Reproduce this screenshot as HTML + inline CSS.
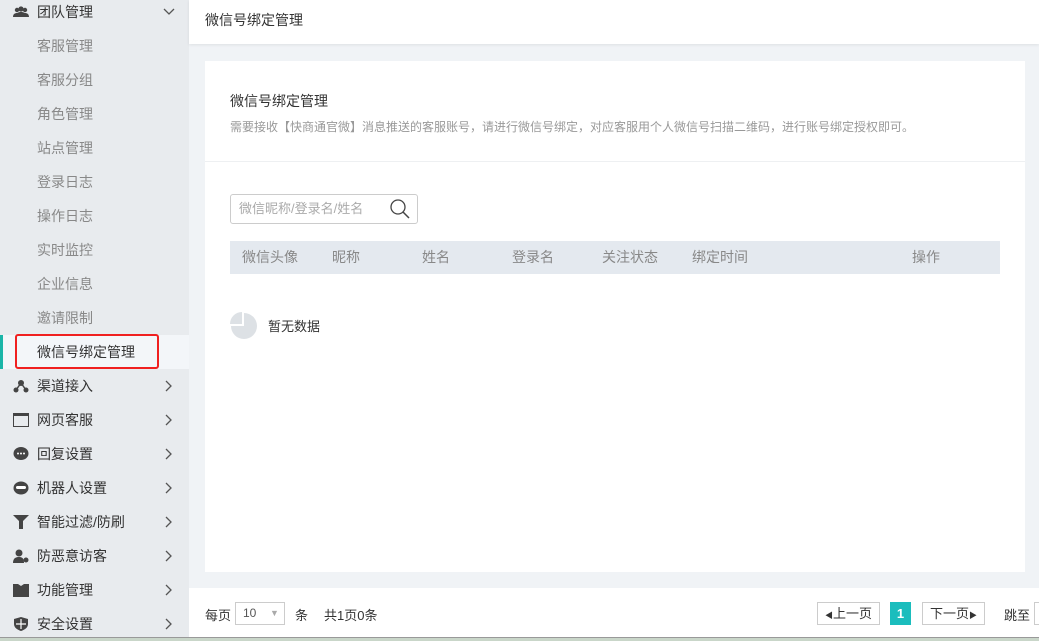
<!DOCTYPE html>
<html><head><meta charset="utf-8"><style>
*{margin:0;padding:0;box-sizing:border-box}
body{width:1039px;height:641px;overflow:hidden;background:#f0f3f6;font-family:"Liberation Sans","Noto Sans CJK SC",sans-serif;position:relative;font-size:14px;color:#333}
.side{position:absolute;left:0;top:0;width:189px;height:637px;background:#e8ebee}
.it{position:absolute;left:0;width:189px;height:34px;line-height:34px;font-size:14px}
.sub{padding-left:37px;color:#888}
.top{padding-left:37px;color:#333}
.ic{position:absolute;left:13px;top:10px;width:16px;height:14px}
.ar{position:absolute;left:165px;top:11px;width:8px;height:12px}
.act{background:#f3f6f9;border-left:3px solid #1ab5a8;padding-left:34px;color:#333}
.red{position:absolute;left:15px;top:334px;width:144px;height:35px;border:2px solid #f02020;border-radius:3px}
.hdr{position:absolute;left:189px;top:0;width:850px;height:44px;background:#fff;box-shadow:0 1px 3px rgba(0,0,0,.08);line-height:40px;padding-left:16px;font-size:14px;color:#333}
.card{position:absolute;left:205px;top:61px;width:820px;height:511px;background:#fff}
.foot{position:absolute;left:189px;top:588px;width:850px;height:49px;background:#fff;font-size:13px;color:#333}
.bl{position:absolute;left:0;top:637px;width:1039px;height:4px;background:#c9d6c9;border-top:1px solid #999}
</style></head><body>
<div class="side">
<div class="it top" style="top:-5px"><svg class="ic" viewBox="0 0 16 14"><circle cx="4" cy="5" r="2.2" fill="#444"/><circle cx="12" cy="5" r="2.2" fill="#444"/><circle cx="8" cy="4" r="2.6" fill="#444"/><path d="M0 12c0-3 2-4 4-4s4 1 4 4zM8 12c0-3 2-4 4-4s4 1 4 4zM3 12c0-4 2-5 5-5s5 1 5 5z" fill="#444"/></svg>团队管理<svg style="position:absolute;left:163px;top:13px" width="12" height="8" viewBox="0 0 12 8"><path d="M1 1l5 5 5-5" fill="none" stroke="#555" stroke-width="1.3"/></svg></div>
<div class="it sub" style="top:29px">客服管理</div>
<div class="it sub" style="top:63px">客服分组</div>
<div class="it sub" style="top:97px">角色管理</div>
<div class="it sub" style="top:131px">站点管理</div>
<div class="it sub" style="top:165px">登录日志</div>
<div class="it sub" style="top:199px">操作日志</div>
<div class="it sub" style="top:233px">实时监控</div>
<div class="it sub" style="top:267px">企业信息</div>
<div class="it sub" style="top:301px">邀请限制</div>
<div class="it act" style="top:335px">微信号绑定管理</div>
<div class="it top" style="top:369px"><svg class="ic" viewBox="0 0 16 14"><circle cx="8" cy="4" r="3" fill="#444"/><circle cx="3" cy="11" r="2.5" fill="#444"/><circle cx="13" cy="11" r="2.5" fill="#444"/><path d="M8 4L3 11M8 4l5 7" stroke="#444" stroke-width="1.5"/></svg>渠道接入<svg class="ar" viewBox="0 0 8 12"><path d="M1 1l5 5-5 5" fill="none" stroke="#555" stroke-width="1.3"/></svg></div>
<div class="it top" style="top:403px"><svg class="ic" viewBox="0 0 16 14"><rect x=".5" y=".5" width="15" height="13" fill="none" stroke="#444"/><rect x="0" y="0" width="16" height="3" fill="#444"/></svg>网页客服<svg class="ar" viewBox="0 0 8 12"><path d="M1 1l5 5-5 5" fill="none" stroke="#555" stroke-width="1.3"/></svg></div>
<div class="it top" style="top:437px"><svg class="ic" viewBox="0 0 16 14"><ellipse cx="8" cy="6.5" rx="7.5" ry="6.5" fill="#444"/><circle cx="5" cy="6.5" r="1" fill="#fff"/><circle cx="8" cy="6.5" r="1" fill="#fff"/><circle cx="11" cy="6.5" r="1" fill="#fff"/></svg>回复设置<svg class="ar" viewBox="0 0 8 12"><path d="M1 1l5 5-5 5" fill="none" stroke="#555" stroke-width="1.3"/></svg></div>
<div class="it top" style="top:471px"><svg class="ic" viewBox="0 0 16 14"><ellipse cx="8" cy="7" rx="7.5" ry="6.5" fill="#444"/><rect x="3" y="5" width="10" height="3" rx="1.5" fill="#fff"/></svg>机器人设置<svg class="ar" viewBox="0 0 8 12"><path d="M1 1l5 5-5 5" fill="none" stroke="#555" stroke-width="1.3"/></svg></div>
<div class="it top" style="top:505px"><svg class="ic" viewBox="0 0 16 14"><path d="M0 0h16L10 6v8H6V6z" fill="#444"/></svg>智能过滤/防刷<svg class="ar" viewBox="0 0 8 12"><path d="M1 1l5 5-5 5" fill="none" stroke="#555" stroke-width="1.3"/></svg></div>
<div class="it top" style="top:539px"><svg class="ic" viewBox="0 0 16 14"><circle cx="6" cy="4" r="3.5" fill="#444"/><path d="M0 14c0-5 3-6 6-6s5 1 5 6z" fill="#444"/><circle cx="13" cy="11" r="2.5" fill="#444"/></svg>防恶意访客<svg class="ar" viewBox="0 0 8 12"><path d="M1 1l5 5-5 5" fill="none" stroke="#555" stroke-width="1.3"/></svg></div>
<div class="it top" style="top:573px"><svg class="ic" viewBox="0 0 16 14"><path d="M0 1h5l3 2 3-2h5v13H0z" fill="#444"/></svg>功能管理<svg class="ar" viewBox="0 0 8 12"><path d="M1 1l5 5-5 5" fill="none" stroke="#555" stroke-width="1.3"/></svg></div>
<div class="it top" style="top:607px"><svg class="ic" viewBox="0 0 16 14"><path d="M8 0l7 2v5c0 4-4 6-7 7-3-1-7-3-7-7V2z" fill="#444"/><path d="M8 2v10M3 7h10" stroke="#fff" stroke-width="1.2"/></svg>安全设置<svg class="ar" viewBox="0 0 8 12"><path d="M1 1l5 5-5 5" fill="none" stroke="#555" stroke-width="1.3"/></svg></div>
</div>
<div class="red"></div>
<div class="hdr">微信号绑定管理</div>
<div class="card">
<div style="position:absolute;left:25px;top:30px;font-size:14px;color:#333">微信号绑定管理</div>
<div style="position:absolute;left:25px;top:57px;font-size:12px;color:#999">需要接收【快商通官微】消息推送的客服账号，请进行微信号绑定，对应客服用个人微信号扫描二维码，进行账号绑定授权即可。</div>
<div style="position:absolute;left:0;top:100px;width:820px;height:1px;background:#eef0f2"></div>
<div style="position:absolute;left:25px;top:133px;width:188px;height:30px;border:1px solid #ccc;border-radius:3px;font-size:13px;color:#aaa;line-height:28px;padding-left:8px">微信昵称/登录名/姓名
<svg style="position:absolute;left:158px;top:3px" width="22" height="22" viewBox="0 0 22 22"><circle cx="9" cy="9" r="7" fill="none" stroke="#444" stroke-width="1.3"/><path d="M14 14l6 6" stroke="#444" stroke-width="1.5"/></svg></div>
<div style="position:absolute;left:25px;top:180px;width:770px;height:33px;background:#e4e9ef;font-size:14px;color:#888;line-height:33px">
<span style="position:absolute;left:12px">微信头像</span><span style="position:absolute;left:102px">昵称</span><span style="position:absolute;left:192px">姓名</span><span style="position:absolute;left:282px">登录名</span><span style="position:absolute;left:372px">关注状态</span><span style="position:absolute;left:462px">绑定时间</span><span style="position:absolute;left:682px">操作</span></div>
<svg style="position:absolute;left:25px;top:251px" width="28" height="28" viewBox="0 0 28 28"><path d="M14 1A13 13 0 1 1 1 14H14z" fill="#dde1e5"/><path d="M12 0A12 12 0 0 0 0 12H12z" fill="#dde1e5"/></svg>
<div style="position:absolute;left:63px;top:255px;font-size:13px;color:#333">暂无数据</div>
</div>
<div class="foot">
<span style="position:absolute;left:16px;top:17px">每页</span>
<div style="position:absolute;left:46px;top:14px;width:50px;height:23px;border:1px solid #ccc;color:#555;font-size:12px;line-height:21px;padding-left:7px">10<span style="position:absolute;left:34px;color:#aaa;font-size:9px">▼</span></div>
<span style="position:absolute;left:106px;top:17px">条</span>
<span style="position:absolute;left:135px;top:17px">共1页0条</span>
<div style="position:absolute;left:628px;top:14px;width:63px;height:23px;border:1px solid #ccc;line-height:21px;text-align:center"><span style="font-size:8px">◀</span>上一页</div>
<div style="position:absolute;left:701px;top:14px;width:21px;height:23px;background:#1bbdbd;color:#fff;line-height:23px;text-align:center;font-weight:bold">1</div>
<div style="position:absolute;left:733px;top:14px;width:63px;height:23px;border:1px solid #ccc;line-height:21px;text-align:center">下一页<span style="font-size:8px">▶</span></div>
<span style="position:absolute;left:815px;top:17px">跳至</span>
<div style="position:absolute;left:845px;top:14px;width:10px;height:23px;border:1px solid #ccc;border-right:none"></div>
</div>
<div class="bl"></div>
</body></html>
